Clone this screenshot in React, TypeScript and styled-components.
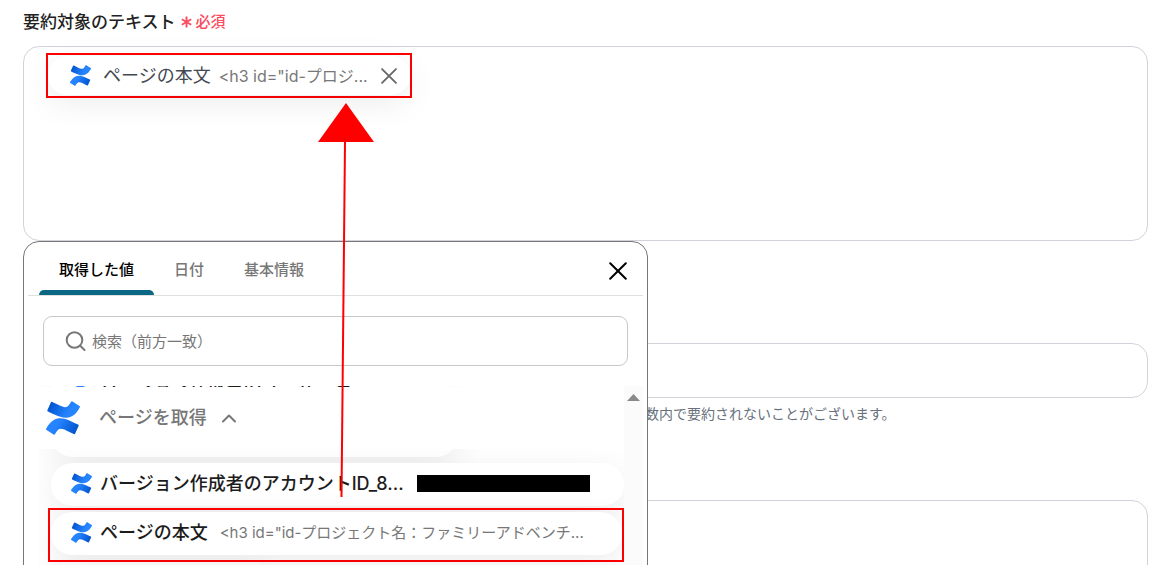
import React, { useId } from "react";
import styled, { createGlobalStyle } from "styled-components";

const GlobalStyle = createGlobalStyle`
  *, *::before, *::after { box-sizing: border-box; }
  body {
    margin: 0;
    background: #fff;
    color: #222;
    font-family: Inter, "Noto Sans CJK JP", sans-serif;
  }
  button, input, textarea { font: inherit; }
`;

const Page = styled.main`
  position: relative;
  height: 100vh;
  padding: 8px 23px 0;
  overflow: hidden;
`;

const Label = styled.div`
  display: flex;
  align-items: center;
  gap: 5px;
  height: 28px;
  margin-bottom: 10px;
  font-size: 17px;
  font-weight: 500;
  line-height: 28px;
  color: #222;
`;

const Required = styled.span`
  display: flex;
  align-items: center;
  gap: 4px;
  font-size: 15px;
  font-weight: 500;
  color: #fa4b5f;
`;

const Field = styled.div`
  position: relative;
`;

const Editor = styled.div`
  height: 195px;
  padding: 6px 22px;
  border: 1px solid #d0d4da;
  border-radius: 16px;
`;

const TextInput = styled.input`
  display: block;
  width: 100%;
  height: 55px;
  margin-top: 102px;
  padding: 0 20px;
  border: 1px solid #d0d4da;
  border-radius: 16px;
  background: #fff;
`;

const TextArea = styled.textarea`
  display: block;
  width: 100%;
  height: 195px;
  margin-top: 90px;
  padding: 16px 20px;
  border: 1px solid #d0d4da;
  border-radius: 16px;
  resize: none;
`;

const Help = styled.p`
  height: 12px;
  margin: 0;
  padding-left: 622px;
  font-size: 14px;
  line-height: 32px;
  color: #68717c;
  white-space: nowrap;
`;

const Marked = styled.div`
  display: flex;
  align-items: center;
  width: 366px;
  height: 45px;
  border: 2px solid #f00;
`;

const Chip = styled.div<{ $width: number; $compact?: boolean }>`
  display: flex;
  flex: none;
  align-items: center;
  width: ${(p) => p.$width}px;
  height: ${(p) => (p.$compact ? 39 : 43)}px;
  padding: ${(p) => (p.$compact ? "0 13px 0 22px" : "0 20px 2px")};
  border-radius: 22px;
  background: #fff;
  box-shadow: 0 8px 32px rgba(0, 0, 0, 0.08);
  white-space: nowrap;
`;

const ChipName = styled.span<{ $light?: boolean }>`
  margin-left: ${(p) => (p.$light ? 12 : 8)}px;
  font-size: 18px;
  line-height: 26px;
  font-weight: ${(p) => (p.$light ? 400 : 500)};
  color: ${(p) => (p.$light ? "#444a52" : "#1c1c1c")};
`;

const ChipValue = styled.span<{ $large?: boolean }>`
  flex: 1;
  min-width: 0;
  margin-left: ${(p) => (p.$large ? 8 : 12)}px;
  font-size: ${(p) => (p.$large ? 16 : 15)}px;
  line-height: 24px;
  color: #777;
`;

const Redacted = styled.span`
  width: 173px;
  height: 17px;
  margin: 0 14px 0 auto;
  background: #000;
`;

const IconButton = styled.button`
  display: flex;
  padding: 0;
  border: 0;
  background: none;
  cursor: pointer;
`;

const Popover = styled.section`
  position: absolute;
  top: 100%;
  left: 0;
  width: 625px;
  max-width: 100%;
  border: 1px solid #777;
  border-radius: 16px;
  background: #fff;
`;

const TabBar = styled.div`
  display: flex;
  align-items: center;
  height: 54px;
  margin: 0 4px;
  padding: 0 16px 0 11px;
  border-bottom: 1px solid #e0e0e0;
`;

const Tab = styled.button<{ $active?: boolean }>`
  position: relative;
  height: 53px;
  padding: 3px 20px 0;
  border: 0;
  background: none;
  font-size: 15px;
  font-weight: 500;
  line-height: 24px;
  color: ${(p) => (p.$active ? "#000" : "#777")};
  cursor: pointer;

  &::after {
    content: "";
    position: absolute;
    inset: auto 0 0;
    height: 5px;
    border-radius: 5px 5px 0 0;
    background: ${(p) => (p.$active ? "#0b6885" : "transparent")};
  }
`;

const CloseButton = styled(IconButton)`
  margin-left: auto;
  padding-top: 5px;
`;

const Search = styled.label`
  display: flex;
  align-items: center;
  gap: 6px;
  height: 50px;
  margin: 20px 19px;
  padding: 0 21px;
  border: 1px solid #c8c8c8;
  border-radius: 9px;
`;

const SearchInput = styled.input`
  flex: 1;
  min-width: 0;
  padding: 1px 0 0;
  border: 0;
  outline: 0;
  background: none;
  font-size: 15px;
  line-height: 24px;
  &::placeholder { color: #777; opacity: 1; }
`;

const ListFrame = styled.div`
  display: flex;
  height: 300px;
  margin: 0 4px 16px 14px;
`;

const List = styled.div`
  flex: 1;
  min-width: 0;
  overflow: hidden;
  padding-top: 1px;
`;

const Items = styled.div`
  display: flex;
  flex-direction: column;
  gap: 6px;
  margin: -84px 0 0 13px;
`;

const GroupHeader = styled.button`
  position: relative;
  z-index: 1;
  display: flex;
  align-items: center;
  width: 100%;
  height: 62px;
  padding: 0 8px;
  border: 0;
  background: #fff;
  color: #777;
  font-size: 18px;
  font-weight: 500;
  line-height: 26px;
  cursor: pointer;

  span { margin: 0 14px 0 19px; }
`;

const MarkedItem = styled(Marked)`
  position: relative;
  z-index: 1;
  align-items: flex-start;
  width: 576px;
  height: 54px;
  margin: -4px 0 -7px -3px;
  padding: 2px 0 0 1px;
`;

const ScrollTrack = styled.div`
  display: flex;
  justify-content: center;
  width: 19px;
  padding-top: 8px;
  background: #fbfbfb;
`;

const Arrow = styled.svg`
  position: absolute;
  z-index: 2;
  top: 103px;
  left: 318px;
  pointer-events: none;
`;

function Confluence({ size }: { size: number }) {
  const id = useId();
  return (
    <svg width={size} height={size} viewBox="0 0 24 24" aria-hidden="true">
      <defs>
        <linearGradient id={id + "a"} x1="0" y1="0.3" x2="1" y2="0.6">
          <stop offset="0" stopColor="#0052cc" />
          <stop offset=".7" stopColor="#2684ff" />
        </linearGradient>
        <linearGradient id={id + "b"} x1="1" y1="0.7" x2="0" y2="0.4">
          <stop offset="0" stopColor="#0052cc" />
          <stop offset=".7" stopColor="#2684ff" />
        </linearGradient>
      </defs>
      <path
        fill={`url(#${id}b)`}
        d="M.87 18.257c-.248.382-.53.875-.763 1.245a.764.764 0 0 0 .255 1.04l4.965 3.054a.764.764 0 0 0 1.058-.26c.199-.332.454-.763.733-1.221 1.967-3.247 3.945-2.853 7.508-1.146l4.957 2.337a.764.764 0 0 0 1.028-.382l2.364-5.346a.764.764 0 0 0-.382-1 599.851 599.851 0 0 1-4.965-2.361C10.911 10.97 5.224 11.185.87 18.257z"
      />
      <path
        fill={`url(#${id}a)`}
        d="M23.131 5.743c.249-.405.531-.875.764-1.25a.764.764 0 0 0-.256-1.034L18.675.404a.764.764 0 0 0-1.058.26c-.195.335-.451.763-.734 1.225-1.966 3.246-3.945 2.85-7.508 1.146L4.437.694a.764.764 0 0 0-1.027.382L1.046 6.422a.764.764 0 0 0 .382 1c1.039.49 3.105 1.467 4.965 2.361 6.698 3.246 12.392 3.029 16.738-4.04z"
      />
    </svg>
  );
}

function Cross({ size, color }: { size: number; color: string }) {
  return (
    <svg width={size} height={size} viewBox="0 0 18 18" aria-hidden="true">
      <path d="M1.2 1.2 16.8 16.8M16.8 1.2 1.2 16.8" fill="none" stroke={color} strokeWidth="2" strokeLinecap="round" />
    </svg>
  );
}

export default function App() {
  return (
    <Page>
      <GlobalStyle />
      <Label id="source-label">
        要約対象のテキスト
        <Required>
          <svg width="11" height="12" viewBox="0 0 11 12" aria-hidden="true">
            <path d="M5.5.5v11M.8 3.300l9.400 5.400M.8 8.700l9.400-5.400" stroke="currentColor" strokeWidth="1.900" />
          </svg>
          必須
        </Required>
      </Label>

      <Field>
        <Editor role="group" aria-labelledby="source-label">
          <Marked>
            <Chip $width={362} $compact>
              <Confluence size={21} />
              <ChipName $light>ページの本文</ChipName>
              <ChipValue $large>&lt;h3 id="id-プロジ...</ChipValue>
              <IconButton type="button" aria-label="削除">
                <Cross size={16} color="#666" />
              </IconButton>
            </Chip>
          </Marked>
        </Editor>

        <Popover>
          <TabBar role="tablist">
            <Tab role="tab" aria-selected="true" $active>取得した値</Tab>
            <Tab role="tab" aria-selected="false">日付</Tab>
            <Tab role="tab" aria-selected="false">基本情報</Tab>
            <CloseButton type="button" aria-label="閉じる">
              <Cross size={18} color="#000" />
            </CloseButton>
          </TabBar>
          <Search>
            <svg width="21" height="21" viewBox="0 0 21 21" fill="none" stroke="#777" strokeWidth="2" strokeLinecap="round" aria-hidden="true">
              <circle cx="9.500" cy="9" r="7.800" />
              <path d="M15.200 14.800 19.500 19" />
            </svg>
            <SearchInput type="text" aria-label="検索" placeholder="検索（前方一致）" />
          </Search>
          <ListFrame>
            <List>
              <GroupHeader type="button" aria-expanded="true">
                <Confluence size={34} />
                <span>ページを取得</span>
                <svg width="16" height="9" viewBox="0 0 16 9" fill="none" stroke="#777" strokeWidth="2" strokeLinecap="round" strokeLinejoin="round" aria-hidden="true">
                  <path d="M2 7.500 8 1.500l6 6" />
                </svg>
              </GroupHeader>
              <Items>
                <Chip $width={400}>
                  <Confluence size={21} />
                  <ChipName>バージョン作成者のユーザー名</ChipName>
                </Chip>
                <Chip $width={407} />
                <Chip $width={573}>
                  <Confluence size={21} />
                  <ChipName>バージョン作成者のアカウントID_8...</ChipName>
                  <Redacted />
                </Chip>
                <MarkedItem>
                  <Chip $width={571}>
                    <Confluence size={21} />
                    <ChipName>ページの本文</ChipName>
                    <ChipValue>&lt;h3 id="id-プロジェクト名：ファミリーアドベンチ...</ChipValue>
                  </Chip>
                </MarkedItem>
                <Chip $width={220} />
              </Items>
            </List>
            <ScrollTrack>
              <svg width="13" height="7" viewBox="0 0 13 7" aria-hidden="true">
                <path d="M6.500 0 13 7H0Z" fill="#8a8a8a" />
              </svg>
            </ScrollTrack>
          </ListFrame>
        </Popover>
      </Field>

      <TextInput type="text" aria-label="文字数" />
      <Help>数内で要約されないことがございます。</Help>
      <TextArea aria-label="要約条件" />

      <Arrow width="56" height="394" viewBox="0 0 56 394" aria-hidden="true">
        <path d="M27 39 23.500 394" stroke="#f00" strokeWidth="2" />
        <path d="M28 0 56 39H0Z" fill="#f00" />
      </Arrow>
    </Page>
  );
}
